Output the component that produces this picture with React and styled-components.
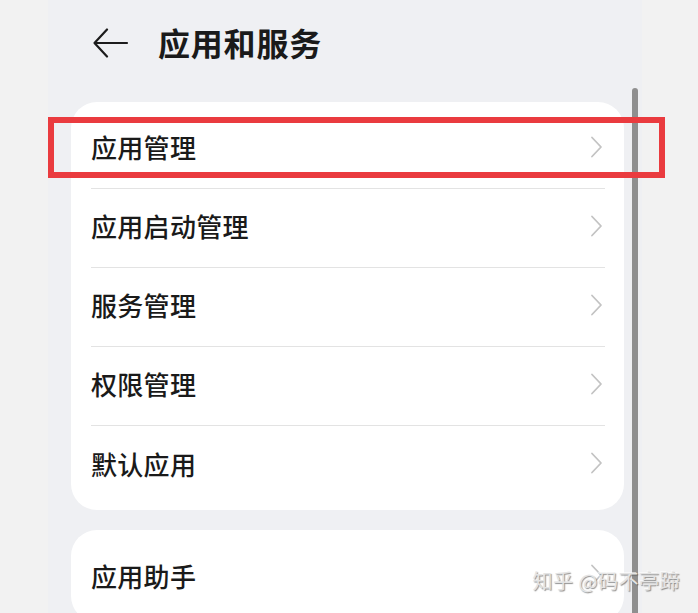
import React from 'react';
import styled, { createGlobalStyle } from 'styled-components';

const GlobalStyle = createGlobalStyle`
  html, body {
    margin: 0;
    padding: 0;
    background: #f2f2f2;
    font-family: "Noto Sans CJK SC", "Noto Sans", sans-serif;
  }
`;

const groups = [
  ['应用管理', '应用启动管理', '服务管理', '权限管理', '默认应用'],
  ['应用助手'],
];

const Chevron = () => (
  <svg width="13" height="22" viewBox="0 0 13 22" fill="none">
    <path d="M2 1.5 L11 11 L2 20.5" stroke="#c3c3c3" strokeWidth="1.8" strokeLinecap="round" strokeLinejoin="round" />
  </svg>
);

const BackArrow = () => (
  <svg width="36" height="30" viewBox="0 0 36 30" fill="none">
    <path d="M14 1.5 L1.5 15 L14 28.5 M1.5 15 H34" stroke="#1c1c1c" strokeWidth="2.2" strokeLinecap="round" strokeLinejoin="round" />
  </svg>
);

const App = () => {
  return (
    <>
      <GlobalStyle />
      <Page>
        <Screen>
          <Header>
            <BackButton><BackArrow /></BackButton>
            <Title>应用和服务</Title>
          </Header>
          {groups.map((items, gi) => (
            <Card key={gi}>
              {items.map((label, i) => (
                <Row key={label} $last={i === items.length - 1}>
                  <Label>{label}</Label>
                  <Chevron />
                </Row>
              ))}
            </Card>
          ))}
          <ScrollBar />
          <Highlight />
        </Screen>
        <Watermark>知乎 @码不亭蹄</Watermark>
      </Page>
    </>
  );
};

const Page = styled.div`
  position: relative;
  width: 698px;
  height: 613px;
  overflow: hidden;
  background: #f2f2f2;
`;

const Screen = styled.div`
  position: relative;
  margin-left: 48px;
  width: 594px;
  height: 613px;
  background: #eff0f3;
  padding-left: 23px;
  box-sizing: border-box;
`;

const Header = styled.div`
  display: flex;
  align-items: center;
  height: 86px;
  padding-left: 22px;
  padding-bottom: 2px;
  box-sizing: border-box;
`;

const BackButton = styled.div`
  display: flex;
  align-items: center;
  width: 36px;
  height: 30px;
  margin-top: 2px;
`;

const Title = styled.h1`
  margin: 0 0 0 29px;
  font-size: 32px;
  font-weight: 600;
  color: #1a1a1a;
  letter-spacing: 0.8px;
`;

const Card = styled.div`
  width: 553px;
  background: #ffffff;
  border-radius: 26px;
  padding: 8px 0 5px;
  margin-top: 16px;
  box-sizing: border-box;

  & + & {
    margin-top: 20px;
  }
`;

const Row = styled.div`
  display: flex;
  align-items: center;
  justify-content: space-between;
  height: 79px;
  margin: 0 19px 0 20px;
  padding: 0 2px 5px 0;
  border-bottom: ${({ $last }) => ($last ? 'none' : '1px solid #e3e3e3')};
  box-sizing: border-box;
`;

const Label = styled.span`
  font-size: 26px;
  font-weight: 500;
  color: #1a1a1a;
  letter-spacing: 0.3px;
`;

const ScrollBar = styled.div`
  position: absolute;
  left: 584px;
  top: 88px;
  width: 6px;
  height: 540px;
  border-radius: 3px;
  background: #8f8f8f;
`;

const Highlight = styled.div`
  position: absolute;
  left: 0;
  top: 117px;
  width: 617px;
  height: 61px;
  border: 6px solid #ea3b3f;
  box-sizing: border-box;
`;

const Watermark = styled.div`
  position: absolute;
  right: 18px;
  bottom: 18px;
  font-size: 20px;
  color: #e4e4e4;
  letter-spacing: 0.5px;
  text-shadow: 1px 1px 1px rgba(70, 70, 70, 0.6), -1px -1px 0 rgba(255, 255, 255, 0.6);
`;

export default App;
